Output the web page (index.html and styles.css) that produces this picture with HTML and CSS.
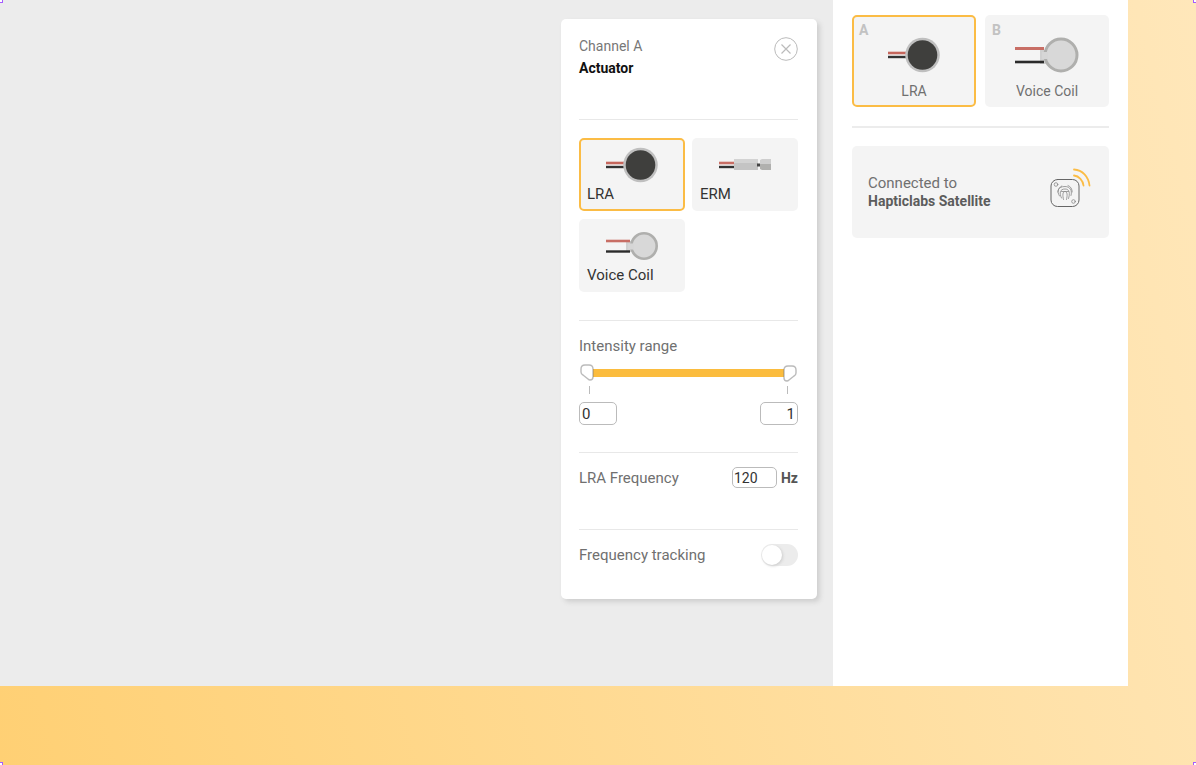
FILE: index.html
```html
<!DOCTYPE html>
<html lang="en">
<head>
<meta charset="utf-8">
<title>Hapticlabs Studio</title>
<link rel="stylesheet" href="styles.css">
</head>
<body>
<svg class="symbols" aria-hidden="true">
  <symbol id="lra" viewBox="0 0 52 36">
    <path d="M0 16H18" stroke="#c5665c" stroke-width="2.6"/>
    <path d="M0 20H18" stroke="#333" stroke-width="2.4"/>
    <circle cx="34.5" cy="18" r="17.3" fill="#bfbfbf"/>
    <circle cx="34.5" cy="18" r="14.8" fill="#3f3f3d"/>
  </symbol>
  <symbol id="coil" viewBox="0 0 52 28">
    <path d="M20 9h8v11h-8z" fill="#d0d0d0"/>
    <circle cx="38" cy="14" r="12.7" fill="#d8d8d8" stroke="#afafad" stroke-width="2.6"/>
    <path d="M22 11.500h6v6h-6z" fill="#d6d6d6"/>
    <path d="M0 9H24" stroke="#c86e65" stroke-width="2.6"/>
    <path d="M0 19.500H24" stroke="#2b2b2b" stroke-width="2.400"/>
  </symbol>
  <symbol id="coil-wide" viewBox="0 0 64 36">
    <path d="M25 13h8v14h-8z" fill="#d0d0d0"/>
    <circle cx="46" cy="18" r="16" fill="#d8d8d8" stroke="#afafad" stroke-width="3"/>
    <path d="M27 15h6v7h-6z" fill="#d6d6d6"/>
    <path d="M0 11.500H29" stroke="#c86e65" stroke-width="3"/>
    <path d="M0 25H29" stroke="#2b2b2b" stroke-width="2.600"/>
  </symbol>
  <symbol id="erm" viewBox="0 0 52 12">
    <path d="M0 4H16" stroke="#c86e65" stroke-width="2.6"/>
    <path d="M0 8H16" stroke="#333" stroke-width="2.4"/>
    <path d="M15 0h24v11H15z" fill="#c4c4c4"/>
    <path d="M15 0h24v4H15z" fill="#d3d3d3"/>
    <path d="M38 4.500h4v3h-4z" fill="#444"/>
    <path d="M41 1l2-1h9v5H41z" fill="#cecece"/>
    <path d="M41 5h11v6h-9l-2-1z" fill="#b0b0ae"/>
  </symbol>
</svg>
<div class="app">
  <main class="workspace">
    <section class="panel">
      <header class="panel-head">
        <h1 class="panel-title"><span class="channel">Channel A</span> Actuator</h1>
        <button class="close" type="button" aria-label="Close">
          <svg width="24" height="24" viewBox="0 0 24 24" fill="none" stroke="#bbb"><circle cx="12" cy="12" r="11.3"/><path d="M7.500 7.500l9 9M16.500 7.500l-9 9" stroke-width="1.200"/></svg>
        </button>
      </header>
      <div class="section types">
        <button class="type selected" type="button"><svg class="type-art" width="52" height="36"><use href="#lra"/></svg>LRA</button>
        <button class="type" type="button"><svg class="type-art" width="52" height="12"><use href="#erm"/></svg>ERM</button>
        <button class="type" type="button"><svg class="type-art" width="52" height="28"><use href="#coil"/></svg>Voice Coil</button>
      </div>
      <div class="section intensity">
        <h2 class="label">Intensity range</h2>
        <div class="slider">
          <input class="range range-min" type="range" min="0" max="1" step="0.01" value="0" aria-label="Minimum intensity">
          <input class="range range-max" type="range" min="0" max="1" step="0.01" value="1" aria-label="Maximum intensity">
        </div>
        <div class="ticks"><span class="tick"></span><span class="tick"></span></div>
        <div class="bounds">
          <input class="field" type="text" value="0" aria-label="Minimum">
          <input class="field field-end" type="text" value="1" aria-label="Maximum">
        </div>
      </div>
      <div class="section row frequency">
        <label class="label" for="freq">LRA Frequency</label>
        <span class="unit-field"><input class="field field-freq" id="freq" type="text" value="120"><b class="unit">Hz</b></span>
      </div>
      <div class="section row tracking">
        <label class="label" for="track">Frequency tracking</label>
        <input class="toggle" id="track" type="checkbox">
      </div>
    </section>
  </main>
  <aside class="sidebar">
    <div class="channels">
      <button class="channel-card selected" type="button"><span class="letter">A</span><svg class="channel-art" width="52" height="36"><use href="#lra"/></svg>LRA</button>
      <button class="channel-card" type="button"><span class="letter">B</span><svg class="channel-art" width="64" height="36"><use href="#coil-wide"/></svg>Voice Coil</button>
    </div>
    <div class="device">
      <p class="device-text">Connected to<b class="device-name">Hapticlabs Satellite</b></p>
      <svg width="42" height="42" viewBox="0 0 42 42" fill="none" stroke="#666" stroke-linecap="round">
        <rect x="2" y="12.500" width="28" height="27" rx="6.500"/>
        <g stroke="#888" stroke-width=".8">
          <circle cx="7" cy="17.500" r="1.800"/><circle cx="24.500" cy="34.500" r="1.800"/>
          <path d="M10.500 29c-3-4.500-1.500-9.500 5.500-9.500 5 0 7.500 4 6 9M12.500 31c-2.500-5-1.500-9 3.500-9s5 5 3.500 9.500M14.500 32.500c-1-4-1-8 1.500-8s2.500 4 1.500 8M12.500 24.500h7M8.800 25c.3-3 1.700-5 4-6M19 18.500c2.800 1 4.200 3.500 4.200 6.500"/>
        </g>
        <path d="M25 8.500c5 .5 9 5 9.500 10M25 2.500c8.500.5 14.500 7 15.500 16" stroke="#fbbc45" stroke-width="1.800"/>
      </svg>
    </div>
  </aside>
</div>
<i class="handle handle-tl"></i><i class="handle handle-tr"></i><i class="handle handle-bl"></i><i class="handle handle-br"></i>
</body>
</html>
```
FILE: styles.css
```css
* { box-sizing: border-box; }
body {
  margin: 0;
  min-height: 100vh;
  display: flex;
  position: relative;
  padding: 0 68px 79px 0;
  background: linear-gradient(75deg, #ffd074, #ffe7ba);
  font: 15px/18px Roboto, sans-serif;
  color: #707070;
}
button, input { font: inherit; margin: 0; }
button { border: 0; cursor: pointer; }
.symbols { position: absolute; width: 0; height: 0; }
.app { flex: 1; display: flex; }
.workspace {
  flex: 1;
  display: flex;
  justify-content: flex-end;
  align-items: flex-start;
  padding: 19px 16px;
  background: #ececec;
}
.panel {
  width: 256px;
  padding: 0 19px 0 18px;
  border-radius: 5px;
  background: #fff;
  box-shadow: 3px 3px 5px #cfcfcf;
}
.panel-head {
  display: flex;
  justify-content: space-between;
  align-items: flex-start;
  padding: 16px 0 40px;
}
.panel-title { margin: 0; font-size: 14px; line-height: 22px; font-weight: 700; color: #111; }
.channel { display: block; font-weight: 400; color: #777; }
.close { display: flex; padding: 2px 0 0; background: none; }
.section { border-top: 1px solid #e8e8e8; }
.types {
  display: grid;
  grid-template-columns: 1fr 1fr;
  gap: 8px 7px;
  padding: 18px 0 28px;
}
.type {
  display: flex;
  flex-direction: column;
  align-items: flex-start;
  justify-content: space-between;
  height: 73px;
  padding: 5px 6px 6px;
  border: 2px solid transparent;
  border-radius: 5px;
  background: #f4f4f4;
  color: #333;
}
.type-art { align-self: center; margin: auto; }
.selected { border-color: #fbbc45; }
.label { margin: 0; font-size: 15px; font-weight: 400; }
.intensity { padding: 16px 0 27px; }
.slider {
  display: grid;
  margin-top: 8px;
  height: 20px;
  background: linear-gradient(#fbbc3e, #fbbc3e) center / calc(100% - 16px) 8px no-repeat;
}
.range {
  grid-area: 1 / 1;
  width: 100%;
  height: 20px;
  appearance: none;
  background: none;
  pointer-events: none;
}
.range::-webkit-slider-thumb {
  appearance: none;
  width: 16px;
  height: 20px;
  pointer-events: auto;
  background: url("data:image/svg+xml,%3Csvg xmlns='http://www.w3.org/2000/svg' width='16' height='20'%3E%3Cpath d='M6 2h4q4 0 4 4v8q0 3-3 3-1 0-2-1l-5-4q-2-1-2-3v-3q0-4 4-4z' fill='%23fff' stroke='%23777' stroke-opacity='.5' stroke-width='1.400'/%3E%3C/svg%3E");
}
.range-max::-webkit-slider-thumb {
  background-image: url("data:image/svg+xml,%3Csvg xmlns='http://www.w3.org/2000/svg' width='16' height='20'%3E%3Cpath d='M6 3h4q4 0 4 4v3q0 2-2 3l-5 4q-1 1-2 1-3 0-3-3v-8q0-4 4-4z' fill='%23fff' stroke='%23777' stroke-opacity='.5' stroke-width='1.400'/%3E%3C/svg%3E");
}
.ticks { display: flex; justify-content: space-between; padding: 3px 10px 8px; }
.tick { width: 1px; height: 8px; background: #bbb; }
.bounds { display: flex; justify-content: space-between; }
.field {
  width: 38px;
  height: 23px;
  padding: 0 2px;
  border: 1px solid #bbb;
  border-radius: 5px;
  background: #fff;
  color: #333;
}
.field-end { text-align: right; }
.field-freq { width: 45px; height: 21px; padding: 0 1px; font-size: 14px; }
.row { display: flex; justify-content: space-between; align-items: center; }
.frequency { padding: 14px 0 41px; }
.unit-field { display: flex; align-items: center; gap: 4px; }
.unit { font-size: 14px; color: #555; }
.tracking { padding: 14px 0 33px; }
.toggle {
  appearance: none;
  display: flex;
  width: 37px;
  height: 22px;
  padding: 1px;
  border-radius: 11px;
  background: #ececec;
}
.toggle::before {
  content: "";
  width: 20px;
  height: 20px;
  border-radius: 50%;
  background: #fff;
  box-shadow: 1px 1px 3px #ccc;
}
.toggle:checked { justify-content: flex-end; background: #fbbc45; }
.sidebar { width: 295px; padding: 15px 19px; background: #fff; }
.channels {
  display: grid;
  grid-template-columns: 1fr 1fr;
  gap: 9px;
  padding-bottom: 19px;
  border-bottom: 2px solid #ececec;
}
.channel-card {
  position: relative;
  display: flex;
  flex-direction: column;
  align-items: center;
  justify-content: space-between;
  height: 92px;
  padding: 20px 0 5px;
  border: 2px solid transparent;
  border-radius: 5px;
  background: #f4f4f4;
  color: #707070;
  font-size: 14px;
}
.channel-card.selected { border-color: #fbbc45; }
.letter { position: absolute; top: 4px; left: 5px; font-weight: 700; color: #c2c2c2; }
.device {
  display: flex;
  justify-content: space-between;
  align-items: center;
  height: 92px;
  margin-top: 18px;
  padding: 0 18px 8px 16px;
  border-radius: 5px;
  background: #f4f4f4;
}
.device-text { margin: 8px 0 0; font-size: 15px; }
.device-name { display: block; font-size: 14px; font-weight: 700; color: #5c5c5c; }
.handle { position: absolute; width: 3px; height: 3px; border: solid #a45cff; border-width: 0; background: #fff; }
.handle-tl { top: 0; left: 0; border-width: 0 1px 1px 0; }
.handle-tr { top: 0; right: 0; border-width: 0 0 1px 1px; }
.handle-bl { bottom: 0; left: 0; border-width: 1px 1px 0 0; }
.handle-br { bottom: 0; right: 0; border-width: 1px 0 0 1px; }
```
